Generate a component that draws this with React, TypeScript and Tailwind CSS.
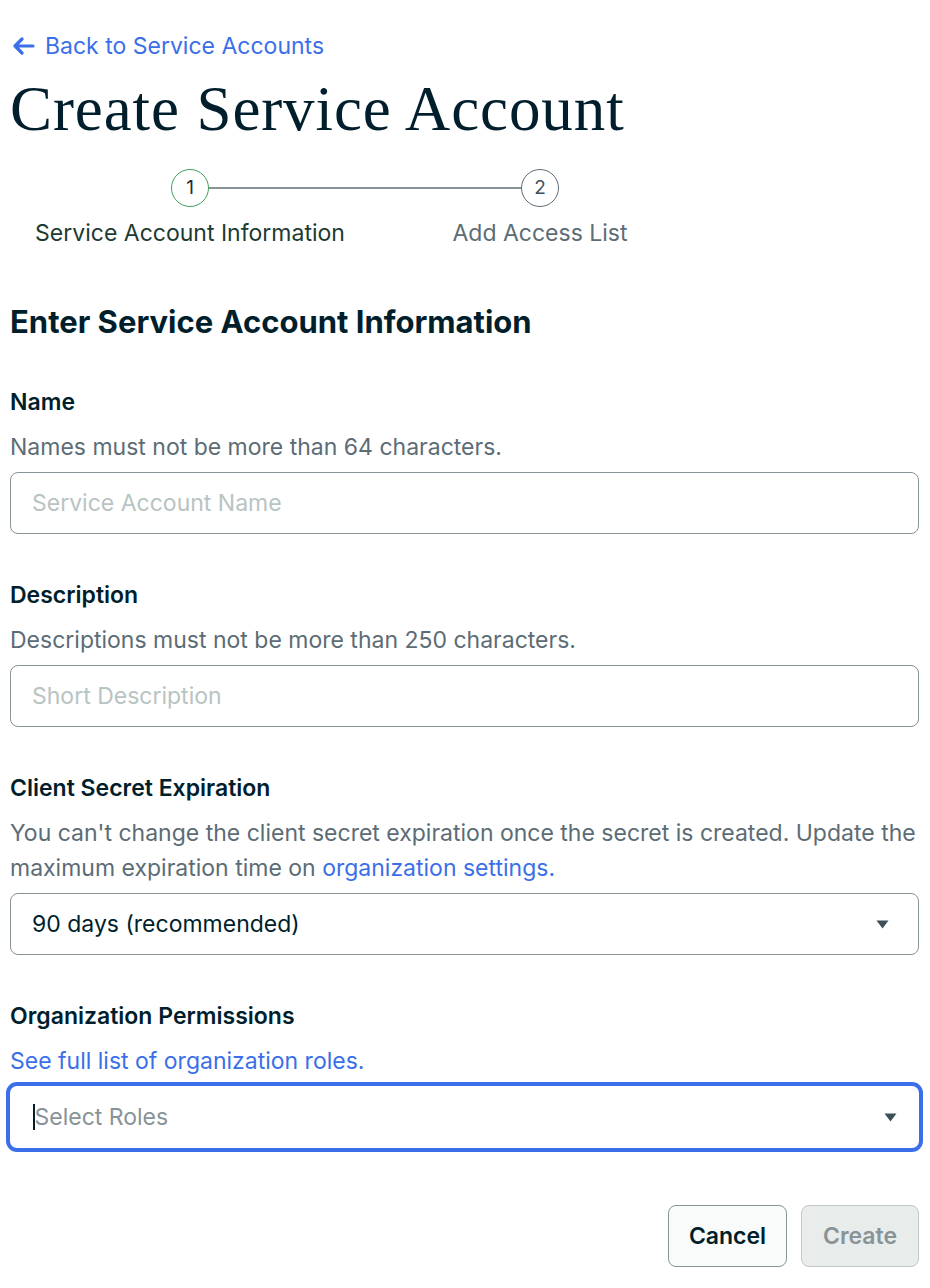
import React from "react";

const sans = "font-['Inter',sans-serif]";

function Caret() {
  return (
    <svg width="13" height="9" viewBox="0 0 13 9">
      <path d="M0.5 0.5 H12.5 L6.5 8.5 Z" fill="#3d4f58" />
    </svg>
  );
}

function Field({
  label,
  help,
  children,
}: {
  label: string;
  help: React.ReactNode;
  children: React.ReactNode;
}) {
  return (
    <div className="flex flex-col">
      <div className="text-[23px] font-semibold leading-[28px] text-[#001e2b]">{label}</div>
      <div className="mt-[14px] text-[23px] leading-[35px] text-[#5c6c75]">{help}</div>
      <div className="mt-[7px]">{children}</div>
    </div>
  );
}

const inputCls =
  "h-[62px] w-full rounded-[8px] border-[1.5px] border-[#889397] px-[21px] text-[23px] text-[#001e2b] outline-none placeholder:text-[#b8c4c2]";

export default function App() {
  return (
    <div className={`min-h-[1288px] bg-white pl-[10px] pr-[11px] pt-[32px] ${sans}`}>
      <a className="flex items-center gap-[10px] pl-[2px] text-[23px] leading-[28px] text-[#3b6fe9]">
        <svg width="23" height="18" viewBox="0 0 23 18">
          <path
            d="M21 9 H3 M10 2 L3 9 L10 16"
            fill="none"
            stroke="#3b6fe9"
            strokeWidth="3.2"
            strokeLinecap="round"
            strokeLinejoin="round"
          />
        </svg>
        <span>Back to Service Accounts</span>
      </a>

      <h1 className="mt-[14px] font-['Liberation_Serif',serif] text-[63px] leading-[70px] tracking-[0.9px] text-[#001e2b]">
        Create Service Account
      </h1>

      {/* stepper */}
      <div className="relative mt-[25px] grid grid-cols-[360px_340px]">
        <div className="absolute left-[199px] top-[18px] h-[2px] w-[312px] bg-[#889397]" />
        <div className="flex flex-col items-center">
          <div className="relative flex h-[38px] w-[38px] items-center justify-center rounded-full border-[1.5px] border-[#3ea05c] bg-white text-[19px] text-[#1c2d38]">
            1
          </div>
          <div className="mt-[11px] whitespace-nowrap text-[23px] leading-[30px] text-[#1c3b32]">
            Service Account Information
          </div>
        </div>
        <div className="flex flex-col items-center">
          <div className="relative flex h-[38px] w-[38px] items-center justify-center rounded-full border-[1.5px] border-[#5c6c75] bg-white text-[19px] text-[#3d4f58]">
            2
          </div>
          <div className="mt-[11px] whitespace-nowrap text-[23px] leading-[30px] text-[#5c6c75]">Add Access List</div>
        </div>
      </div>

      <h2 className="mt-[54px] text-[31px] font-bold leading-[40px] text-[#001e2b]">
        Enter Service Account Information
      </h2>

      <div className="mt-[46px] flex flex-col gap-[47px]">
        <Field label="Name" help="Names must not be more than 64 characters.">
          <input className={inputCls} placeholder="Service Account Name" />
        </Field>
        <Field label="Description" help="Descriptions must not be more than 250 characters.">
          <input className={inputCls} placeholder="Short Description" />
        </Field>
        <Field
          label="Client Secret Expiration"
          help={
            <>
              You can't change the client secret expiration once the secret is created. Update the maximum
              expiration time on <span className="text-[#3b6fe9]">organization settings.</span>
            </>
          }
        >
          <div className="flex h-[62px] w-full items-center justify-between rounded-[8px] border-[1.5px] border-[#889397] pl-[21px] pr-[29px] text-[23px] text-[#001e2b]">
            <span>90 days (recommended)</span>
            <Caret />
          </div>
        </Field>
        <Field
          label="Organization Permissions"
          help={<span className="text-[#3b6fe9]">See full list of organization roles.</span>}
        >
          <div className="-mx-[4px] -my-[4px] flex h-[70px] items-center justify-between rounded-[11px] border-[4px] border-[#3b6fe9] pl-[23px] pr-[22px] text-[23px]">
            <span className="flex items-center">
              <span className="h-[26px] w-[1.5px] bg-[#001e2b]" />
              <span className="text-[#889397]">Select Roles</span>
            </span>
            <Caret />
          </div>
        </Field>
      </div>

      <div className="mt-[57px] flex justify-end gap-[14px]">
        <button className="h-[62px] w-[119px] rounded-[8px] border-[1.5px] border-[#889397] bg-[#f9fbfa] text-[23px] font-semibold text-[#001e2b]">
          Cancel
        </button>
        <button className="h-[62px] w-[118px] rounded-[8px] border-[1.5px] border-[#c1c7c6] bg-[#e8edeb] text-[23px] font-semibold text-[#889397]">
          Create
        </button>
      </div>
    </div>
  );
}
